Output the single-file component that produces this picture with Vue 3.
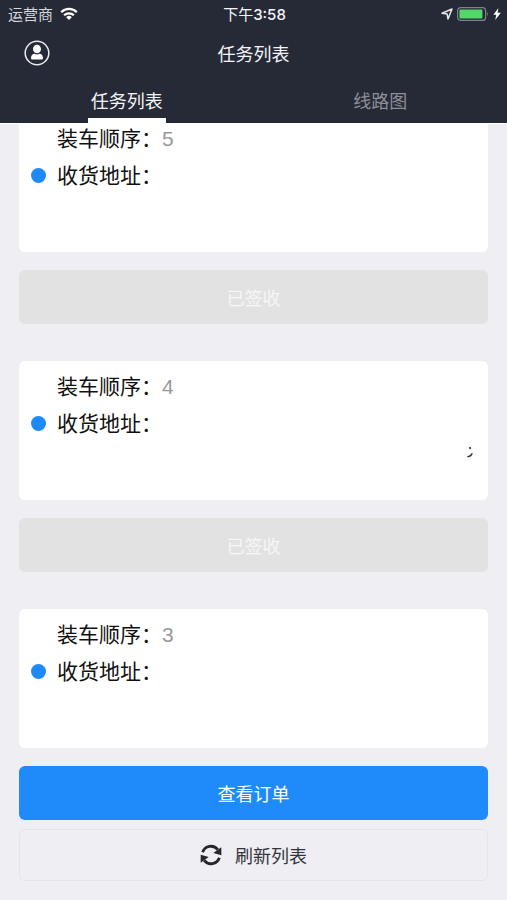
<script setup>
    import {ref} from 'vue';

    const tabs = ['任务列表', '线路图']
    const active_tab = ref(0)

    const tasks = [
        { order: 5, signed: true, remark: false },
        { order: 4, signed: true, remark: true },
        { order: 3, signed: false, remark: false }
    ]
</script>

<template>
<div class="page" lang="zh-CN">
    <header class="header">
        <div class="status">
            <div class="status_left">
                <span>运营商</span>
                <svg width="18" height="14" viewBox="0 0 18 14" fill="none" stroke="#fff" stroke-width="2.3">
                    <path d="M1.2 5.2a11 11 0 0 1 15.6 0" />
                    <path d="M4.1 8.3a7 7 0 0 1 9.8 0" />
                    <path d="M9 13 6.2 10.2a4 4 0 0 1 5.6 0z" fill="#fff" stroke="none" />
                </svg>
            </div>
            <span class="time">下午<b>3:58</b></span>
            <div class="status_right">
                <svg width="12" height="12" viewBox="0 0 12 12">
                    <path d="M11 1 7 11 6.1 6 1 5.2z" fill="none" stroke="#e4e5ea" stroke-width="1.5" stroke-linejoin="round" />
                </svg>
                <svg width="32" height="14" viewBox="0 0 32 14">
                    <rect x="0.6" y="0.6" width="28" height="12.8" rx="3" fill="none" stroke="#7e828a" stroke-width="1.2" />
                    <rect x="2.4" y="2.4" width="23" height="9.2" rx="1.2" fill="#53d769" />
                    <path d="M30 4.6q1.8 2.4 0 4.8z" fill="#7e828a" />
                </svg>
                <svg width="8" height="12" viewBox="0 0 8 12">
                    <path d="M5.4 0 0.4 6.7h2.9L2.2 12 7.8 4.8H4.6z" fill="#fff" />
                </svg>
            </div>
        </div>

        <div class="nav">
            <button class="user" aria-label="我的">
                <svg width="26" height="26" viewBox="0 0 26 26">
                    <circle cx="13" cy="13" r="11.8" fill="none" stroke="#e9eaee" stroke-width="1.5" />
                    <ellipse cx="13" cy="9" rx="4" ry="4.3" fill="#fff" />
                    <path d="M7 18.2c0-3 1.500-4.300 3.500-4.500q2.500 1.400 5 0c2 .2 3.500 1.500 3.500 4.500q0 1.300-1.300 1.300H8.300q-1.300 0-1.300-1.300z" fill="#fff" />
                </svg>
            </button>
            <h1>任务列表</h1>
        </div>

        <nav class="tabs">
            <button
                v-for="(tab, i) in tabs"
                :key="tab"
                :class="{ active: i === active_tab }"
                @click="active_tab = i"
            ><span>{{ tab }}</span></button>
        </nav>
    </header>

    <main class="list">
        <section v-for="task in tasks" :key="task.order" class="task">
            <div class="card">
                <p>装车顺序：<span class="order">{{ task.order }}</span></p>
                <p class="address">收货地址：</p>
                <svg v-if="task.remark" class="remark" width="8" height="14" viewBox="0 0 8 14">
                    <circle cx="4" cy="3" r="1.2" fill="#555" />
                    <path d="M1 11.500q3-.5 4.800-3.500l1 .6q-1 3.600-5 4z" fill="#333" />
                </svg>
            </div>
            <button v-if="task.signed" class="btn signed" disabled>已签收</button>
            <button v-else class="btn primary">查看订单</button>
        </section>
    </main>

    <footer class="footer">
        <button class="btn refresh">
            <svg width="22" height="22" viewBox="0 0 22 22">
                <g fill="none" stroke="#25272d" stroke-width="2.8">
                    <path d="M2.600 8.200A8.800 8.800 0 0 1 17.800 5.600" />
                    <path d="M19.400 13.800A8.800 8.800 0 0 1 4.200 16.400" />
                </g>
                <path d="M21.300 3.200v8l-8-2.200z" fill="#25272d" />
                <path d="M.7 18.800v-8l8 2.200z" fill="#25272d" />
            </svg>
            <span>刷新列表</span>
        </button>
    </footer>
</div>
</template>

<style>
    body {
        margin: 0;
        background: #eeeef3;
    }
</style>

<style scoped>
    .page {
        display: flex;
        flex-direction: column;
        height: 100vh;
        font-family: "Liberation Sans", "Noto Sans CJK SC", sans-serif;
        font-size: 18px;
    }
    button {
        border: 0;
        padding: 0;
        background: none;
        font: inherit;
        color: inherit;
    }
    svg {
        display: block;
        flex: none;
    }
    .header {
        flex: none;
        background: #262a36;
        color: #f4f5f8;
        border-bottom: 1px solid #fff;
    }
    .status {
        display: grid;
        grid-template-columns: 1fr auto 1fr;
        align-items: center;
        height: 27px;
        padding: 0 6px 0 8px;
        font-size: 15px;
    }
    .status_left, .status_right {
        display: flex;
        align-items: center;
        gap: 7px;
        color: #d5d7de;
    }
    .status_right {
        justify-content: flex-end;
        gap: 4px;
    }
    .time {
        font-family: Inter, "Noto Sans CJK SC", sans-serif;
    }
    .time b {
        font-weight: 500;
    }
    .nav {
        display: grid;
        grid-template-columns: 1fr auto 1fr;
        align-items: center;
        height: 52px;
        padding: 0 24px;
    }
    .user {
        justify-self: start;
    }
    h1 {
        margin: 0;
        font-size: 18px;
        font-weight: 400;
    }
    .tabs {
        display: flex;
        height: 44px;
    }
    .tabs button {
        display: flex;
        flex: 1;
        justify-content: center;
        color: #8c8e97;
    }
    .tabs span {
        box-sizing: border-box;
        height: 44px;
        padding: 0 3px;
        line-height: 46px;
    }
    .tabs .active {
        color: #f4f5f8;
    }
    .tabs .active span {
        border-bottom: 5px solid #fff;
    }
    .list {
        display: flex;
        flex: 1;
        flex-direction: column;
        justify-content: flex-end;
        gap: 37px;
        min-height: 0;
        overflow: hidden;
        padding: 0 19px;
    }
    .task {
        display: flex;
        flex: none;
        flex-direction: column;
        gap: 18px;
    }
    .card {
        position: relative;
        box-sizing: border-box;
        min-height: 139px;
        padding: 7px 38px;
        border-radius: 6px;
        background: #fff;
        color: #111;
        font-size: 21px;
        line-height: 37px;
    }
    .card p {
        margin: 0;
    }
    .order {
        color: #999;
    }
    .address {
        position: relative;
    }
    .address::before {
        content: "";
        position: absolute;
        top: 11px;
        left: -26px;
        width: 15px;
        height: 15px;
        border-radius: 50%;
        background: #1f89f8;
    }
    .remark {
        position: absolute;
        right: 14px;
        bottom: 41px;
    }
    .btn {
        box-sizing: border-box;
        width: 100%;
        height: 54px;
        border-radius: 6px;
        color: #fff;
    }
    .signed {
        background: #e2e2e2;
        color: #f6f6f6;
    }
    .primary {
        background: #1f8bfb;
    }
    .footer {
        flex: none;
        padding: 9px 19px 19px;
    }
    .refresh {
        display: flex;
        align-items: center;
        justify-content: center;
        gap: 13px;
        height: 52px;
        border: 1px solid #e5e5e9;
        color: #33353c;
    }
</style>
